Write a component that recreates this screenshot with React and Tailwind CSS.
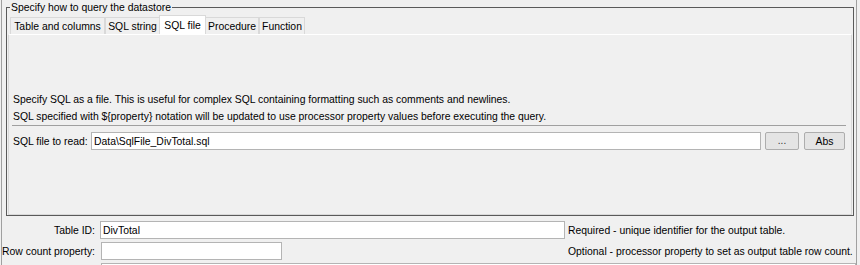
import { useState } from "react";

const tabs = [
  { label: "Table and columns", w: "w-[95px]" },
  { label: "SQL string", w: "w-[55px]" },
  { label: "SQL file", w: "w-[47px]" },
  { label: "Procedure", w: "w-[54px]" },
  { label: "Function", w: "w-[46px]" },
];

const App = () => {
  const [active, setActive] = useState("SQL file");
  const [sqlFile, setSqlFile] = useState("Data\\SqlFile_DivTotal.sql");
  const [tableId, setTableId] = useState("DivTotal");
  const [rowCount, setRowCount] = useState("");

  return (
    <div className="relative w-[860px] h-[265px] overflow-hidden bg-[#f0f0f0] text-[10.4px] leading-[13px] text-black font-['Liberation_Sans',Arial,sans-serif]">
      {/* window edges */}
      <div className="absolute left-[1px] top-0 h-full w-px bg-[#a0a0a0]" />
      <div className="absolute right-[3px] top-0 h-full w-px bg-[#a0a0a0]" />

      {/* Query group */}
      <fieldset className="ml-[6px] mt-px w-[848px] h-[215px] border border-[#5a5a5a] px-px pb-px">
        <legend className="ml-[2px] px-px leading-[13px]">
          Specify how to query the datastore
        </legend>

        {/* Tabs */}
        <div className="flex items-end h-[19px] pl-[2px] mt-[1px]">
          {tabs.map((t) => {
            const sel = t.label === active;
            return (
              <button
                key={t.label}
                onClick={() => setActive(t.label)}
                className={
                  sel
                    ? `${t.w} h-[19px] -mx-px z-10 bg-white border border-b-0 border-[#d9d9d9] text-center`
                    : `${t.w} h-[17px] bg-[#f0f0f0] border border-b-0 border-[#d9d9d9] text-center`
                }
              >
                {t.label}
              </button>
            );
          })}
        </div>

        {/* Tab panel */}
        <div className="h-[181px] border border-[#d9d9d9] border-t-white bg-[#f0f0f0] px-[3px] pt-[56px]">
          <p className="pl-px leading-[17px]">
            Specify SQL as a file. This is useful for complex SQL containing formatting such as comments and newlines.
          </p>
          <p className="pl-px leading-[17px]">
            SQL specified with {"${property}"} notation will be updated to use processor property values before executing the query.
          </p>
          <div className="mr-[2px] h-px bg-[#a0a0a0]" />

          <div className="flex items-center mt-[6px] h-[18px]">
            <span className="pl-px w-[79px] whitespace-nowrap">SQL file to read:</span>
            <input
              value={sqlFile}
              onChange={(e) => setSqlFile(e.target.value)}
              className="w-[670px] h-[18px] border border-[#b4b4b4] bg-white px-[2px] outline-none text-[10.4px]"
            />
            <button className="ml-[4px] w-[34px] h-[18px] border border-[#adadad] rounded-[2px] bg-[#e4e4e4] text-[10px] leading-[10px] text-[#333]">
              ...
            </button>
            <button className="ml-[5px] w-[41px] h-[18px] border border-[#adadad] rounded-[2px] bg-[#e4e4e4]">
              Abs
            </button>
          </div>
        </div>
      </fieldset>

      {/* Output table fields */}
      <div className="grid grid-cols-[97px_468px_1fr] items-center gap-y-[3px] mt-[5px]">
        <span className="text-right pr-[2px]">Table ID:</span>
        <input
          value={tableId}
          onChange={(e) => setTableId(e.target.value)}
          className="ml-[3px] w-[465px] h-[18px] border border-[#b4b4b4] bg-white px-[2px] outline-none text-[10.4px]"
        />
        <span className="pl-[3px] whitespace-nowrap">Required - unique identifier for the output table.</span>

        <span className="text-right pr-[2px] whitespace-nowrap">Row count property:</span>
        <input
          value={rowCount}
          onChange={(e) => setRowCount(e.target.value)}
          className="ml-[4px] w-[181px] h-[18px] border border-[#b4b4b4] bg-white px-[2px] outline-none text-[10.4px]"
        />
        <span className="pl-[3px] whitespace-nowrap">Optional - processor property to set as output table row count.</span>

        <span />
        <div className="ml-[4px] w-[755px] h-[18px] border border-[#b4b4b4] bg-white" />
      </div>
    </div>
  );
};

export default App;
